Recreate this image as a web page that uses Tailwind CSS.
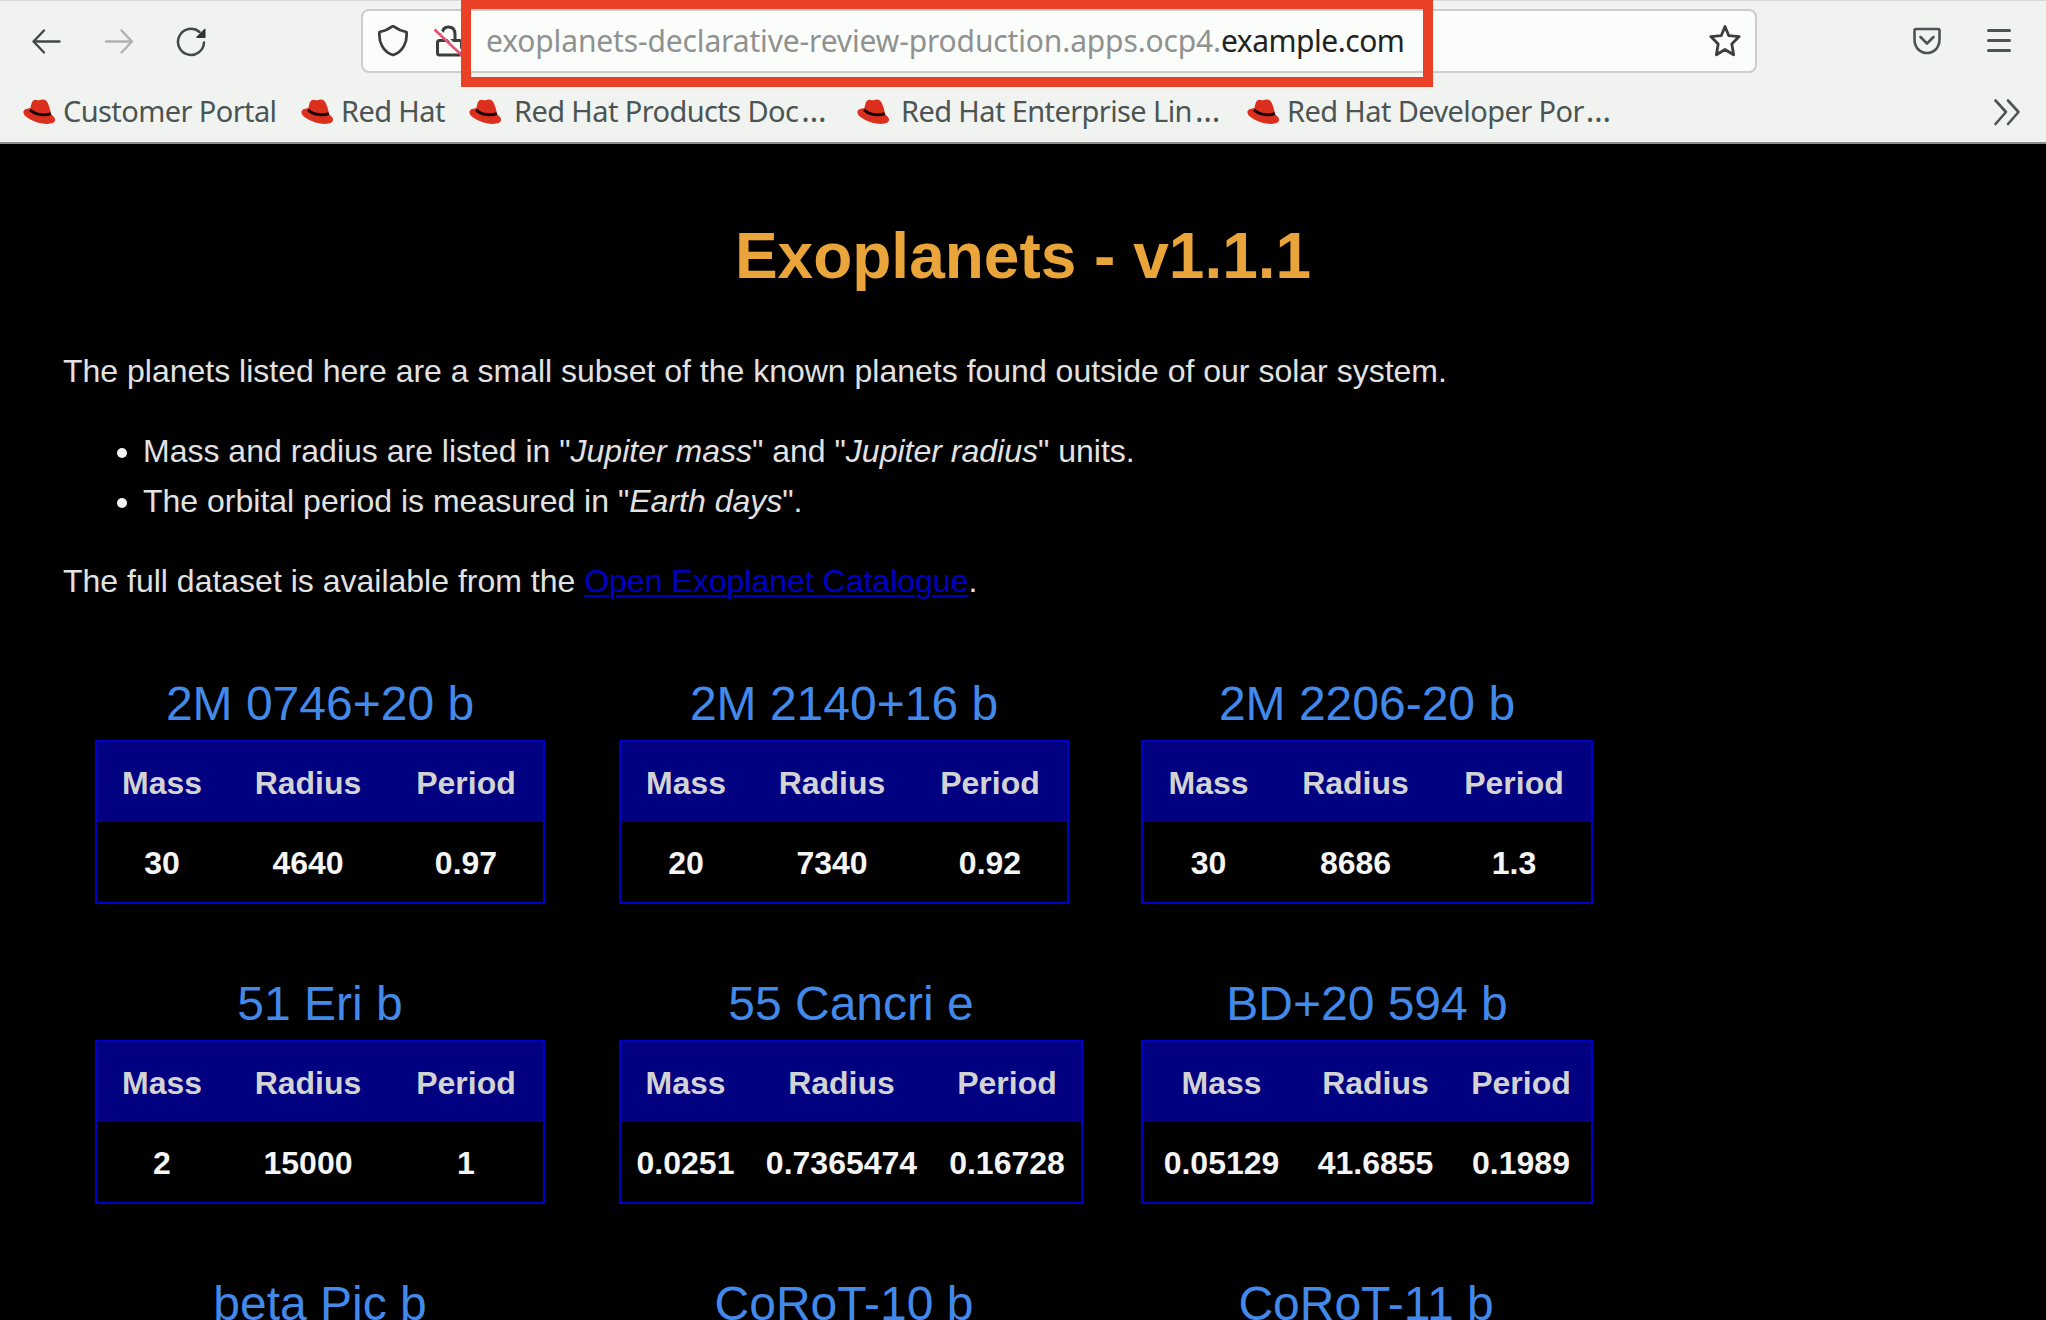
<!DOCTYPE html>
<html lang="en">
<head>
<meta charset="utf-8">
<title>Exoplanets</title>
<script src="https://cdn.jsdelivr.net/npm/@tailwindcss/browser@4"></script>
</head>
<body class="w-[2046px] h-[1320px] overflow-hidden bg-black">
<svg class="hidden">
  <symbol id="hat" viewBox="0 0 32 26">
    <ellipse cx="16.200" cy="17" rx="16.400" ry="6.700" transform="rotate(16 16.200 17)" fill="#dc301f"/>
    <path d="M6.500 12L8.800 3.500Q10 .300 13 .800Q15 1.700 17 1Q21 -.300 23.500 2Q25.800 4.500 28.300 15.500Q18 19 6.500 12Z" fill="#dc301f"/>
    <path d="M7 10.800Q11.500 14.800 18 15.600Q24 16.200 27.800 14.600" fill="none" stroke="#150504" stroke-width="3"/>
  </symbol>
</svg>

<div class="relative w-full h-[144px] bg-[#f1f3f1] border-t border-t-[#d8dad8] border-b-2 border-b-[#8e8e8c] text-[#4b5553] font-['Noto_Sans',sans-serif]">
  <!-- navigation bar -->
  <div class="flex items-center h-[79px] pl-[30px]">
    <svg class="w-8 h-8" viewBox="0 0 32 32" fill="none" stroke="#3f4a48" stroke-width="2.400" stroke-linecap="round" stroke-linejoin="round"><path d="M29.500 16.500H3.500M14 5.500L3.500 16.500L14 27.500"/></svg>
    <svg class="w-8 h-8 ml-[41px]" viewBox="0 0 32 32" fill="none" stroke="#b0b2b0" stroke-width="2.400" stroke-linecap="round" stroke-linejoin="round"><path d="M3 16.500H29M18.500 5.500L29 16.500L18.500 27.500"/></svg>
    <svg class="w-8 h-8 ml-[41px]" viewBox="0 0 32 32" fill="none" stroke="#3f4a48" stroke-width="2.500" stroke-linecap="round"><path d="M28 17.500A13 13 0 1 1 23.500 7"/><path d="M28.800 4.500V12.300H21Z" fill="#2c3735" stroke="#2c3735" stroke-width="1.500" stroke-linejoin="round"/></svg>
    <div class="flex items-center h-16 w-[1396px] ml-[153px] rounded-lg border-2 border-[#d0ccc8] bg-[#fbfdfa] pl-[14px] pr-[14px]">
      <svg class="w-8 h-8" viewBox="0 0 32 32" fill="none" stroke="#3a3f3e" stroke-width="2.800" stroke-linejoin="round"><path d="M16 1C12 4 7.500 6 2.500 7C1.500 17 6 27 16 30C26 27 30.500 17 29.500 7C24.500 6 20 4 16 1Z"/></svg>
      <svg class="w-8 h-8 ml-[24px]" viewBox="0 0 32 32" fill="none" stroke="#3a3f3e" stroke-width="3"><rect x="4.500" y="15.500" width="24" height="14.500" rx="2"/><path d="M9 9Q9.500 2 15.500 2Q22 2 22 9.500V15.500"/><path d="M4 3L32 29.500" stroke="#fbfdfa" stroke-width="2"/><path d="M1.500 4.500L29 30.500" stroke="#ea5070" stroke-width="2.600"/></svg>
      <div class="ml-[21px] text-[30px] leading-[40px] whitespace-nowrap text-[#8f9290]"><span class="tracking-[-0.147px]">exoplanets-declarative-review-production.apps.ocp4.</span><span class="text-[#1f2423] tracking-[-0.5px]">example.com</span></div>
      <svg class="w-8 h-8 ml-auto" viewBox="0 0 32 32" fill="none" stroke="#3a3f3e" stroke-width="2.800" stroke-linejoin="round"><path d="M16 1.500L19.800 10.700L30.200 11.600L22.800 19L24.600 29.800L16 24.500L7.400 29.800L9.200 19L1.800 11.600L12.200 10.700Z"/></svg>
    </div>
    <svg class="w-7 h-7 ml-[156px]" viewBox="0 0 28 28" fill="none" stroke="#4b5553" stroke-width="2.600" stroke-linecap="round" stroke-linejoin="round"><path d="M3 2H25Q26.500 2 26.500 3.500V12.500C26.500 20.500 21 26 14 26C7 26 1.500 20.500 1.500 12.500V3.500Q1.500 2 3 2Z"/><path d="M7.500 10L14 16.500L20.500 10"/></svg>
    <svg class="w-6 h-6 ml-[46px]" viewBox="0 0 24 24" stroke="#4b5553" stroke-width="3" stroke-linecap="round"><path d="M1.500 1.500H22.500M1.500 11.500H22.500M1.500 21.500H22.500"/></svg>
  </div>
  <!-- bookmarks bar -->
  <div class="flex items-center h-[62px] pb-[1px] pl-[23px] text-[29px] leading-[40px] tracking-[-0.6px] whitespace-nowrap">
    <div class="flex items-center w-[278px] gap-[8px]"><svg class="w-8 h-[26px] mt-0.5"><use href="#hat"/></svg><span>Customer Portal</span></div>
    <div class="flex items-center w-[168px] gap-[8px]"><svg class="w-8 h-[26px] mt-0.5"><use href="#hat"/></svg><span>Red Hat</span></div>
    <div class="flex items-center w-[388px] gap-[13px]"><svg class="w-8 h-[26px] mt-0.5"><use href="#hat"/></svg><span>Red Hat Products Doc<span class="text-[32px] ml-[3px]">…</span></span></div>
    <div class="flex items-center w-[390px] gap-[12px]"><svg class="w-8 h-[26px] mt-0.5"><use href="#hat"/></svg><span>Red Hat Enterprise Lin<span class="text-[32px] ml-[3px]">…</span></span></div>
    <div class="flex items-center gap-[8px] tracking-[-0.6px]"><svg class="w-8 h-[26px] mt-0.5"><use href="#hat"/></svg><span>Red Hat Developer Por<span class="text-[32px] ml-0.5">…</span></span></div>
    <svg class="w-7 h-7 ml-auto mr-[25px] mt-0.5" viewBox="0 0 28 28" fill="none" stroke="#4b5553" stroke-width="2.600" stroke-linecap="round" stroke-linejoin="round"><path d="M2.500 2.500L13 14L2.500 26M15 2.500L25.500 14L15 26"/></svg>
  </div>
  <!-- address highlight -->
  <div class="absolute left-[461px] -top-px w-[972px] h-[87px] border-10 border-t-9 border-[#ea4026]"></div>
</div>

<main class="font-['Liberation_Sans',Arial,sans-serif] text-[32px] leading-[50px] text-[#e2e2e2] pt-[76px]">
  <h1 class="text-center font-bold text-[64px] leading-[72px] text-[#e9a43a]">Exoplanets - v1.1.1</h1>
  <div class="pl-[63px] pt-[54px]">
    <p>The planets listed here are a small subset of the known planets found outside of our solar system.</p>
    <ul class="my-[30px]">
      <li class="flex items-center pl-[53px] gap-[17px]"><span class="w-2.5 h-2.5 ml-px -mr-px rounded-full bg-[#f4f4f4] mt-1"></span><span>Mass and radius are listed in "<i>Jupiter mass</i>" and "<i>Jupiter radius</i>" units.</span></li>
      <li class="flex items-center pl-[53px] gap-[17px]"><span class="w-2.5 h-2.5 ml-px -mr-px rounded-full bg-[#f4f4f4] mt-1"></span><span>The orbital period is measured in "<i>Earth days</i>".</span></li>
    </ul>
    <p>The full dataset is available from the <a class="text-[#0000c4] underline decoration-2 underline-offset-[3px]">Open Exoplanet Catalogue</a>.</p>
  </div>
  <div id="planets" class="grid grid-cols-[524px_522px_500px] grid-rows-[300px_300px_44px] pl-[95px] pt-[70px]"></div>
</main>
<script>
const planets = [
  ["2M 0746+20 b", "30", "4640", "0.97", [130, 162, 154]],
  ["2M 2140+16 b", "20", "7340", "0.92", [130, 162, 154]],
  ["2M 2206-20 b", "30", "8686", "1.3", [131, 163, 154]],
  ["51 Eri b", "2", "15000", "1", [130, 162, 154]],
  ["55 Cancri e", "0.0251", "0.7365474", "0.16728", [129, 183, 148]],
  ["BD+20 594 b", "0.05129", "41.6855", "0.1989", [157, 151, 140]],
  ["beta Pic b"],
  ["CoRoT-10 b"],
  ["CoRoT-11 b"],
];
const heading = (name) => `<h2 class="h-11 mb-5 pt-px text-center text-[48px] leading-[54px] text-[#4289ea]">${name}</h2>`;
document.getElementById("planets").innerHTML = planets.map(([name, m, r, p, w]) => {
  if (!w) return `<section class="w-[450px] h-11">${heading(name)}</section>`;
  const cols = `style="grid-template-columns:${w.map(x => x + "px").join(" ")}"`;
  return `<section class="w-max">
    ${heading(name)}
    <div class="border-2 border-[#0000cb] font-bold text-center leading-[36px]">
      <div class="grid h-20 pt-[23px] bg-[#000080] text-[#d3d3d3]" ${cols}><span>Mass</span><span>Radius</span><span>Period</span></div>
      <div class="grid h-20 pt-[23px] text-[#f5f5f5]" ${cols}><span>${m}</span><span>${r}</span><span>${p}</span></div>
    </div>
  </section>`;
}).join("");
</script>
</body>
</html>
